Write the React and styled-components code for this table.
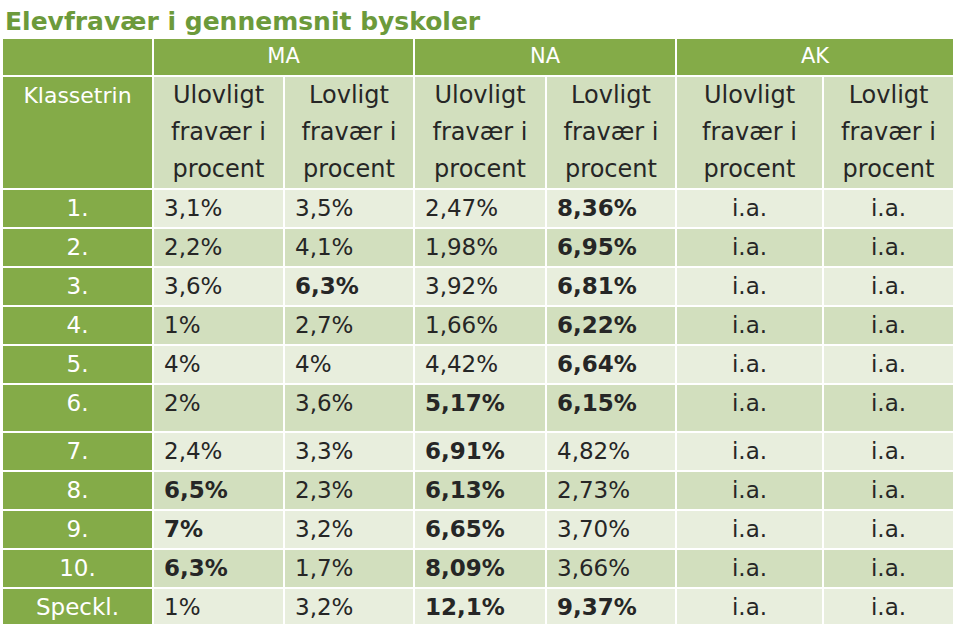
import React from 'react';
import styled, { createGlobalStyle } from 'styled-components';

const GlobalStyle = createGlobalStyle`
  * { box-sizing: border-box; }
  body {
    margin: 0;
    background: #ffffff;
    font-family: "DejaVu Sans", "Liberation Sans", sans-serif;
  }
`;

const Page = styled.div`
  width: 960px;
  height: 624px;
  overflow: hidden;
  background: #ffffff;
`;

const Title = styled.h1`
  margin: 0;
  height: 39px;
  padding: 5px 0 0 5px;
  font-size: 25px;
  line-height: 34px;
  font-weight: 700;
  color: #6c9a3b;
  white-space: nowrap;
`;

const Table = styled.table`
  margin-left: 3px;
  width: 950px;
  table-layout: fixed;
  border-collapse: separate;
  border-spacing: 0;
  color: #262626;
`;

const Cell = styled.td`
  height: ${({ h }) => h}px;
  padding: 0 0 0 ${({ align }) => (align === 'left' ? '10px' : '0')};
  border-left: ${({ first }) => (first ? 'none' : '2px solid #ffffff')};
  border-top: ${({ top }) => (top ? 'none' : '2px solid #ffffff')};
  background: ${({ tone }) =>
    tone === 'green' ? '#84ab48' : tone === 'dark' ? '#d2dfbe' : '#e8eedd'};
  color: ${({ tone }) => (tone === 'green' ? '#ffffff' : '#262626')};
  text-align: ${({ align }) => align || 'center'};
  vertical-align: top;
  font-size: ${({ size }) => size || 23}px;
  line-height: 37px;
  font-weight: ${({ bold }) => (bold ? 700 : 400)};
  white-space: nowrap;
  overflow: hidden;
`;

const GroupCell = styled(Cell)`
  font-size: 21px;
  line-height: 34px;
`;

const HeadText = styled.div`
  white-space: normal;
  padding: 0 8px;
  font-size: 24px;
  line-height: 37px;
`;

const widths = [149, 131, 130, 132, 130, 147, 131];

// a value starting with '*' is bold in the reference
const rows = [
  ['1.', '3,1%', '3,5%', '2,47%', '*8,36%'],
  ['2.', '2,2%', '4,1%', '1,98%', '*6,95%'],
  ['3.', '3,6%', '*6,3%', '3,92%', '*6,81%'],
  ['4.', '1%', '2,7%', '1,66%', '*6,22%'],
  ['5.', '4%', '4%', '4,42%', '*6,64%'],
  ['6.', '2%', '3,6%', '*5,17%', '*6,15%'],
  ['7.', '2,4%', '3,3%', '*6,91%', '4,82%'],
  ['8.', '*6,5%', '2,3%', '*6,13%', '2,73%'],
  ['9.', '*7%', '3,2%', '*6,65%', '3,70%'],
  ['10.', '*6,3%', '1,7%', '*8,09%', '3,66%'],
  ['Speckl.', '1%', '3,2%', '*12,1%', '*9,37%'],
];

const rowHeights = [38.7, 38.7, 38.7, 38.7, 38.7, 47.5, 38.7, 38.7, 38.7, 38.7, 38.7];

const subHeads = ['Ulovligt fravær i procent', 'Lovligt fravær i procent'];

export default function App() {
  return (
    <Page>
      <GlobalStyle />
      <Title>Elevfravær i gennemsnit byskoler</Title>
      <Table>
        <colgroup>
          {widths.map((w, i) => (
            <col key={i} style={{ width: w }} />
          ))}
        </colgroup>
        <thead>
          <tr>
            <GroupCell as="th" first top tone="green" h={36} />
            {['MA', 'NA', 'AK'].map((g) => (
              <GroupCell as="th" key={g} colSpan={2} top tone="green" h={36}>
                {g}
              </GroupCell>
            ))}
          </tr>
          <tr>
            <Cell as="th" first tone="green" h={112} size={22}>
              Klassetrin
            </Cell>
            {[0, 1, 2].flatMap((g) =>
              subHeads.map((s, j) => (
                <Cell as="th" key={`${g}-${j}`} tone="dark" h={112}>
                  <HeadText>{s}</HeadText>
                </Cell>
              ))
            )}
          </tr>
        </thead>
        <tbody>
          {rows.map((r, i) => {
            const tone = i % 2 === 0 ? 'light' : 'dark';
            const h = rowHeights[i];
            return (
              <tr key={r[0]}>
                <Cell first tone="green" h={h}>
                  {r[0]}
                </Cell>
                {r.slice(1).map((v, j) => (
                  <Cell key={j} tone={tone} h={h} align="left" bold={v.startsWith('*')}>
                    {v.replace('*', '')}
                  </Cell>
                ))}
                <Cell tone={tone} h={h}>i.a.</Cell>
                <Cell tone={tone} h={h}>i.a.</Cell>
              </tr>
            );
          })}
        </tbody>
      </Table>
    </Page>
  );
}
